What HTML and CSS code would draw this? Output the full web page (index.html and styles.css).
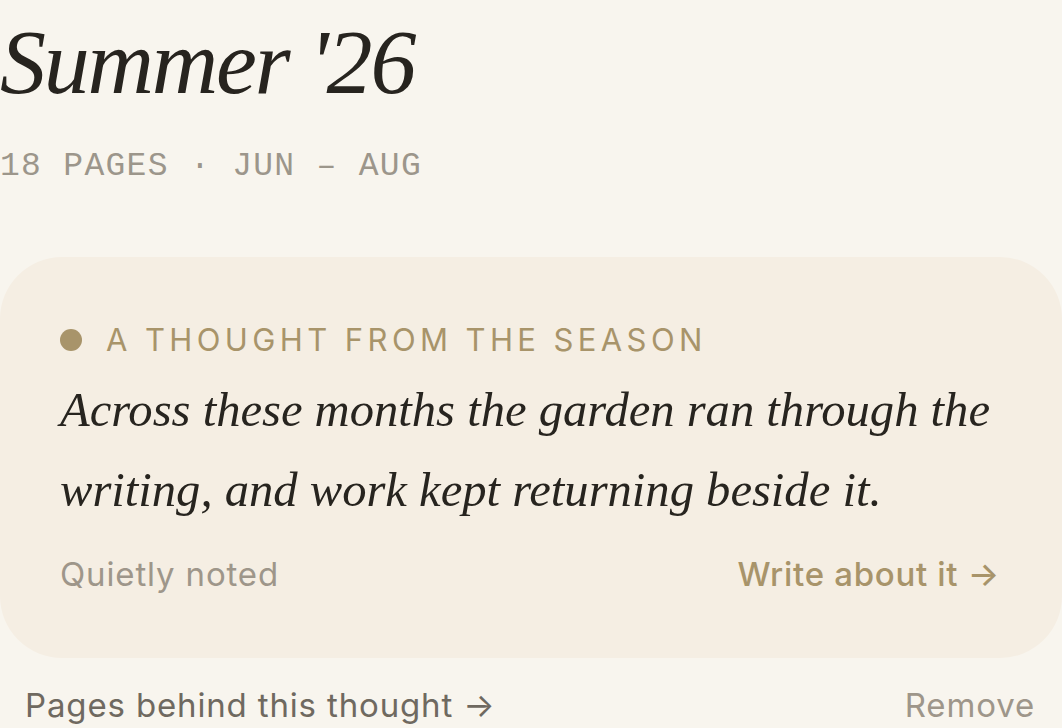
FILE: index.html
```html
<!DOCTYPE html>
<html lang="en">
<head>
<meta charset="utf-8">
<title>Summer '26</title>
<link rel="stylesheet" href="styles.css">
</head>
<body>
<main class="page">
  <header class="head">
    <h1 class="title">Summer '26</h1>
    <p class="meta">18 PAGES · JUN – AUG</p>
  </header>
  <section class="card">
    <div class="label"><span class="dot"></span><span>A THOUGHT FROM THE SEASON</span></div>
    <p class="quote">Across these months the garden ran through the writing, and work kept returning beside it.</p>
    <div class="card-foot">
      <span class="quiet">Quietly noted</span>
      <a class="write" href="#">Write about it <span class="arrow">→</span></a>
    </div>
  </section>
  <div class="below">
    <a class="pages" href="#">Pages behind this thought <span class="arrow">→</span></a>
    <a class="remove" href="#">Remove</a>
  </div>
</main>
</body>
</html>
```
FILE: styles.css
```css
html, body {
  margin: 0;
  padding: 0;
  background: #f8f5ee;
}
body {
  width: 1062px;
  height: 728px;
  overflow: hidden;
  font-family: Inter, "Liberation Sans", sans-serif;
}
.page {
  display: flex;
  flex-direction: column;
}
.head {
  display: flex;
  flex-direction: column;
}
.title {
  margin: 0;
  font-family: "Liberation Serif", serif;
  font-style: italic;
  font-weight: 400;
  font-size: 92px;
  letter-spacing: -2.2px;
  line-height: 1;
  color: #27241f;
  padding-top: 16px;
}
.meta {
  margin: 42px 0 0;
  font-family: "Liberation Mono", monospace;
  font-size: 33px;
  letter-spacing: 1.3px;
  line-height: 1;
  color: #9c968b;
}
.card {
  margin-top: 74px;
  background: #f5eee3;
  border-radius: 62px;
  padding: 65px 62px 64px 60px;
  display: flex;
  flex-direction: column;
}
.label {
  display: flex;
  align-items: center;
  gap: 24px;
  color: #a8946a;
  font-size: 31px;
  letter-spacing: 4.4px;
  line-height: 36px;
}
.dot {
  width: 22px;
  height: 22px;
  border-radius: 50%;
  background: #a8946a;
  flex: none;
}
.quote {
  margin: 12px 0 0;
  font-family: "Liberation Serif", serif;
  font-style: italic;
  font-size: 48.6px;
  line-height: 80px;
  color: #27241f;
}
.card-foot {
  margin-top: 24px;
  display: flex;
  justify-content: space-between;
  align-items: baseline;
  font-size: 33px;
  letter-spacing: 0.85px;
  line-height: 40px;
}
.quiet {
  color: #9e968a;
}
.write {
  color: #a8946a;
  font-weight: 500;
  letter-spacing: 0.7px;
  text-decoration: none;
}
.below {
  display: flex;
  justify-content: space-between;
  align-items: baseline;
  padding: 27px 27px 0 25px;
  font-size: 33px;
  letter-spacing: 0.85px;
  line-height: 40px;
}
.pages {
  color: #6f6960;
  text-decoration: none;
}
.remove {
  color: #9e968a;
  text-decoration: none;
}
```
